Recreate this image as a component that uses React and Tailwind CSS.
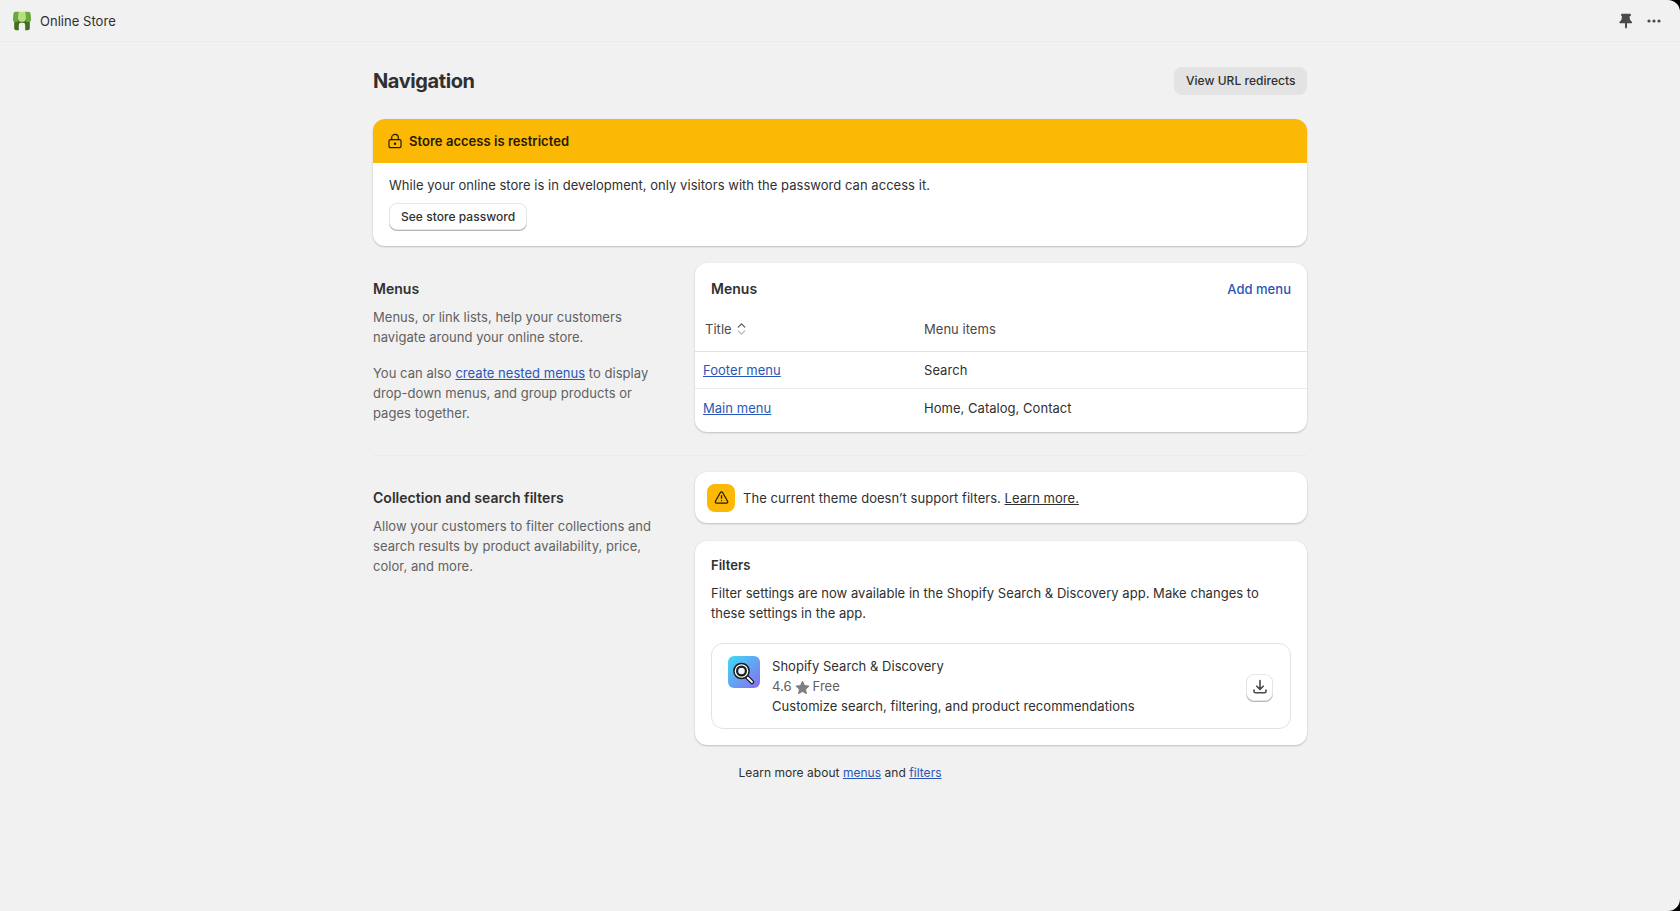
import React from 'react';
import { ChevronDown, ChevronUp, LockKeyhole, TriangleAlert } from 'lucide-react';

const font = { fontFamily: 'Inter, "Liberation Sans", sans-serif' };

const cardClass = 'bg-white rounded-[12px] shadow-[0_1px_2px_rgba(0,0,0,0.2),0_0_1px_rgba(0,0,0,0.08)]';
const linkClass = 'text-[#2a56b8] underline';
const softButton = 'bg-white border border-[#e6e6e6] shadow-[0_1px_0_#b5b5b5]';

const StoreLogo = () => (
  <svg width="20" height="20" viewBox="0 0 20 20">
    <path d="M2.2 8h15.6v9.2a2 2 0 0 1-2 2h-2.6V14a2.2 2.2 0 0 0-2.2-2.2h-2A2.2 2.2 0 0 0 6.8 14v5.2H4.2a2 2 0 0 1-2-2z" fill="#40701f" />
    <path d="M3.5.8h3.4L6.3 8.4a2.7 2.7 0 0 1-5.4 0l.5-5.6A2.2 2.2 0 0 1 3.5.8z" fill="#6ba83a" />
    <path d="M16.5.8h-3.4l.6 7.6a2.7 2.7 0 0 0 5.4 0l-.5-5.6A2.2 2.2 0 0 0 16.5.8z" fill="#6ba83a" />
    <path d="M6.9.8h6.2l.6 7.6a2.7 2.7 0 0 1-3.7 2.2 2.7 2.7 0 0 1-3.7-2.2z" fill="#b5e07f" />
  </svg>
);

const AppIcon = () => (
  <svg width="32" height="32" viewBox="0 0 32 32">
    <defs>
      <linearGradient id="app-grad" x1="0" y1="0" x2="1" y2="1">
        <stop offset="0" stopColor="#3ddcf5" />
        <stop offset="1" stopColor="#8a6cf0" />
      </linearGradient>
    </defs>
    <rect width="32" height="32" rx="6" fill="url(#app-grad)" />
    <path d="M19 21l5 5" stroke="#1c1c1c" strokeWidth="4.5" strokeLinecap="round" />
    <path d="M19.5 21.5l4.5 4.5" stroke="#fff" strokeWidth="1.8" strokeLinecap="round" />
    <circle cx="13.5" cy="15" r="7.6" fill="#fff" stroke="#1c1c1c" strokeWidth="1.5" />
    <circle cx="13.5" cy="15" r="4.4" fill="#eef3ff" stroke="#1c1c1c" strokeWidth="2.2" />
  </svg>
);

const PinIcon = () => (
  <svg width="14" height="16" viewBox="0 0 14 16" fill="#4a4a4a">
    <path d="M3 .8h8a.9.9 0 0 1 .9.9v.6a.9.9 0 0 1-.9.9h-.5l.5 3.6 2 2.2c.4.5.1 1.2-.5 1.2H8v4.2l-1 1.3-1-1.3v-4.2H1c-.6 0-.9-.7-.5-1.2l2-2.2L3 3.2h-.1a.9.9 0 0 1-.8-.9v-.6A.9.9 0 0 1 3 .8z" />
  </svg>
);

const DotsIcon = () => (
  <svg width="14" height="4" viewBox="0 0 14 4" fill="#4a4a4a">
    <circle cx="2" cy="2" r="1.6" />
    <circle cx="7" cy="2" r="1.6" />
    <circle cx="12" cy="2" r="1.6" />
  </svg>
);

const TrayDownload = () => (
  <svg width="16" height="16" viewBox="0 0 16 16" fill="none" stroke="#4a4a4a" strokeWidth="1.6" strokeLinecap="round" strokeLinejoin="round">
    <path d="M8 1.5v8.5M4.8 7.2L8 10.4l3.2-3.2" />
    <path d="M2 11v1.3a1.4 1.4 0 0 0 1.4 1.4h9.2a1.4 1.4 0 0 0 1.4-1.4V11" />
  </svg>
);

const menus = [
  { title: 'Footer menu', items: 'Search' },
  { title: 'Main menu', items: 'Home, Catalog, Contact' },
];

export default function App() {
  return (
    <div className="h-[911px] bg-black overflow-hidden" style={font}>
      <div className="h-[911px] bg-[#f1f1f1] rounded-tr-[12px] rounded-br-[12px] text-[13px] leading-[20px] tracking-[0.035px] text-[#303030]">
        <header className="h-[42px] flex items-center justify-between pl-3 pr-[19px] border-b border-[#ebebeb]">
          <div className="flex items-center gap-[8px]">
            <StoreLogo />
            <span className="text-[13px] text-[#303030]">Online Store</span>
          </div>
          <div className="flex items-center gap-[14px]">
            <PinIcon />
            <DotsIcon />
          </div>
        </header>

        <main className="w-[934px] mx-auto">
          <div className="flex items-center justify-between h-[77px]">
            <h1 className="text-[20px] leading-[24px] font-[650] tracking-[-0.4px] text-[#303030]">Navigation</h1>
            <button className="h-[28px] px-[11.5px] rounded-[8px] bg-[#e3e3e3] text-[12px] font-medium text-[#303030]">View URL redirects</button>
          </div>

          <section className={`${cardClass} overflow-hidden`}>
            <div className="h-[44px] bg-[#fbb805] flex items-center gap-[6px] pl-[14px] font-semibold text-[#251a00]">
              <LockKeyhole size={16} strokeWidth={1.8} />
              <span>Store access is restricted</span>
            </div>
            <div className="px-4 pt-[12px] pb-[16px]">
              <p>While your online store is in development, only visitors with the password can access it.</p>
              <button className={`${softButton} mt-[8px] h-[27px] px-[11px] rounded-[8px] text-[12px] font-medium block`}>See store password</button>
            </div>
          </section>

          <div className="grid grid-cols-[306px_1fr] gap-x-[16px] mt-[17px]">
            <div className="pt-[16px] pr-2">
              <h2 className="text-[14px] font-semibold leading-[20px]">Menus</h2>
              <p className="mt-[7.5px] text-[#616161]">Menus, or link lists, help your customers navigate around your online store.</p>
              <p className="mt-[16px] text-[#616161]">You can also <a className={linkClass}>create nested menus</a> to display drop-down menus, and group products or pages together.</p>
            </div>
            <section className={`${cardClass} h-[169px]`}>
              <div className="flex items-center justify-between px-4 pt-[16px]">
                <h2 className="text-[14px] font-semibold leading-[20px]">Menus</h2>
                <a className="text-[#2a56b8] font-medium">Add menu</a>
              </div>
              <div className="mt-[7px] h-[46px] flex items-center border-b border-[#e3e3e3] text-[#4a4a4a]">
                <div className="w-[229px] pl-[10px] flex items-center gap-[3px]">
                  Title
                  <span className="flex flex-col -space-y-[6px]">
                    <ChevronUp size={13} strokeWidth={2.2} className="text-[#555555]" />
                    <ChevronDown size={13} strokeWidth={2.2} className="text-[#b5b5b5]" />
                  </span>
                </div>
                <div>Menu items</div>
              </div>
              {menus.map((menu, i) => (
                <div key={menu.title} className={`flex items-center ${i === 0 ? 'h-[37px] border-b border-[#ebebeb]' : 'h-[37px]'}`}>
                  <div className="w-[229px] pl-[8px]"><a className={linkClass}>{menu.title}</a></div>
                  <div>{menu.items}</div>
                </div>
              ))}
            </section>
          </div>

          <div className="h-px bg-[#ebebeb] mt-[23px]" />

          <div className="grid grid-cols-[306px_1fr] gap-x-[16px] mt-[16px]">
            <div className="pt-[16px] pr-2">
              <h2 className="text-[14px] font-semibold leading-[20px]">Collection and search filters</h2>
              <p className="mt-[7.5px] text-[#616161]">Allow your customers to filter collections and search results by product availability, price, color, and more.</p>
            </div>
            <div className="flex flex-col gap-[18px]">
              <section className={`${cardClass} h-[51px] flex items-center gap-[8px] px-[12px]`}>
                <span className="w-[28px] h-[28px] rounded-[8px] bg-[#fbb805] flex items-center justify-center text-[#251a00]">
                  <TriangleAlert size={15} strokeWidth={2} />
                </span>
                <p>The current theme doesn’t support filters. <a className="underline">Learn more.</a></p>
              </section>

              <section className={`${cardClass} px-4 pb-4 pt-[14px]`}>
                <h2 className="font-semibold">Filters</h2>
                <p className="mt-[8px]">Filter settings are now available in the Shopify Search &amp; Discovery app. Make changes to these settings in the app.</p>
                <div className="mt-[20px] h-[86px] rounded-[12px] border border-[#e3e3e3] flex items-start pl-[16px] pr-[17px] pt-[12px] gap-[12px]">
                  <AppIcon />
                  <div>
                    <div>Shopify Search &amp; Discovery</div>
                    <div className="flex items-center text-[#616161]">
                      4.6
                      <svg width="15" height="15" viewBox="0 0 20 20" className="mt-[3px] ml-[3px] mr-[3px]"><path d="M10 2l2.5 5.4 5.8.8-4.3 4 1.1 5.8L10 15.1 4.9 18l1.1-5.8-4.3-4 5.8-.8z" fill="#808080" stroke="#808080" strokeWidth="1.5" strokeLinejoin="round" /></svg>
                      Free
                    </div>
                    <div>Customize search, filtering, and product recommendations</div>
                  </div>
                  <button className={`${softButton} ml-auto self-center -mt-[10px] w-[27px] h-[27px] rounded-[8px] flex items-center justify-center`}>
                    <TrayDownload />
                  </button>
                </div>
              </section>
            </div>
          </div>

          <p className="text-center text-[12px] leading-[16px] mt-[20px]">
            Learn more about <a className={linkClass}>menus</a> and <a className={linkClass}>filters</a>
          </p>
        </main>
      </div>
    </div>
  );
}
